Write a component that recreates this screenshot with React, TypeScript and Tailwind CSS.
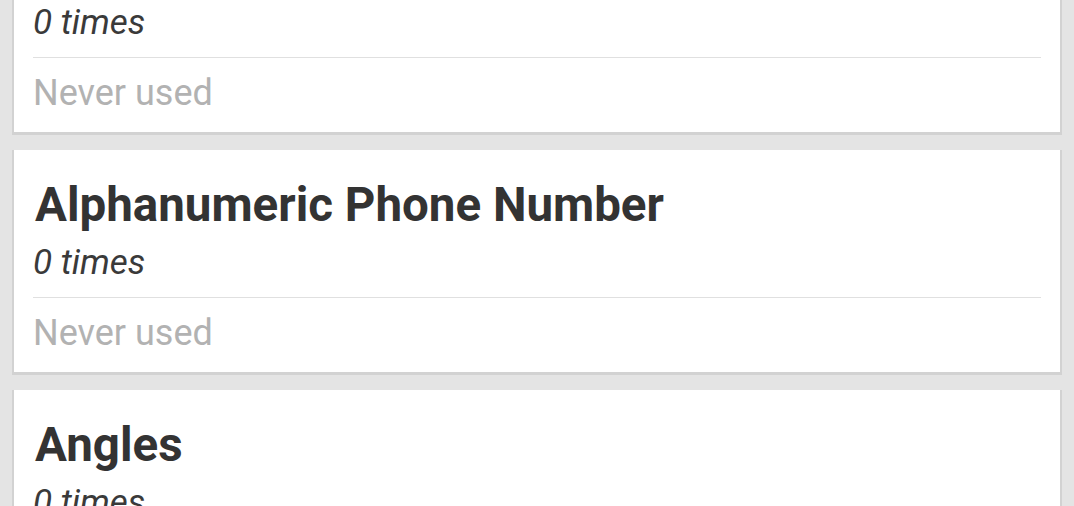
const items = [
  { name: "Alpha", count: "0 times", last: "Never used" },
  { name: "Alphanumeric Phone Number", count: "0 times", last: "Never used" },
  { name: "Angles", count: "0 times", last: "Never used" },
];

function Card({ name, count, last }: { name: string; count: string; last: string }) {
  return (
    <div className="mx-[12px] bg-white border-x-2 border-b-[3px] border-[#d2d2d2]">
      <div className="px-[19px] pt-[27px] pb-[19px]">
        <div className="pl-[2px] text-[47.5px] leading-[56px] font-bold text-[#333333] whitespace-nowrap">{name}</div>
        <div className="mt-[10px] text-[35px] leading-[40px] italic text-[#3a3a3a]">{count}</div>
        <div className="mt-[14px] h-px bg-[#e0e0e0]" />
        <div className="mt-[15px] text-[36px] leading-[40px] text-[#b2b2b2]">{last}</div>
      </div>
    </div>
  );
}

export default function App() {
  return (
    <div
      className="w-[1074px] h-[506px] overflow-hidden bg-[#e4e4e4]"
      style={{ fontFamily: "Roboto, 'Noto Sans', sans-serif" }}
    >
      <div className="-mt-[90px] flex flex-col gap-[15px]">
        {items.map((it) => (
          <Card key={it.name} {...it} />
        ))}
      </div>
    </div>
  );
}
